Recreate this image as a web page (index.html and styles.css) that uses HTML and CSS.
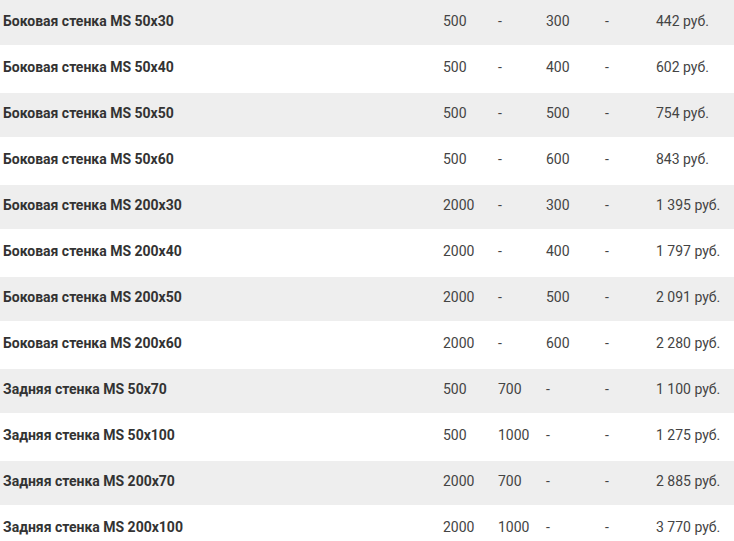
FILE: index.html
```html
<!DOCTYPE html>
<html lang="ru">
<head>
<meta charset="utf-8">
<link rel="stylesheet" href="styles.css">
</head>
<body>
<table class="price">
<colgroup>
<col class="c-name"><col class="c-a"><col class="c-b"><col class="c-c"><col class="c-d"><col class="c-p">
</colgroup>
<tbody>
<tr class="odd"><td class="name">Боковая стенка MS 50x30</td><td>500</td><td>-</td><td>300</td><td>-</td><td>442 руб.</td></tr>
<tr><td class="name">Боковая стенка MS 50x40</td><td>500</td><td>-</td><td>400</td><td>-</td><td>602 руб.</td></tr>
<tr class="odd"><td class="name">Боковая стенка MS 50x50</td><td>500</td><td>-</td><td>500</td><td>-</td><td>754 руб.</td></tr>
<tr><td class="name">Боковая стенка MS 50x60</td><td>500</td><td>-</td><td>600</td><td>-</td><td>843 руб.</td></tr>
<tr class="odd"><td class="name">Боковая стенка MS 200x30</td><td>2000</td><td>-</td><td>300</td><td>-</td><td>1 395 руб.</td></tr>
<tr><td class="name">Боковая стенка MS 200x40</td><td>2000</td><td>-</td><td>400</td><td>-</td><td>1 797 руб.</td></tr>
<tr class="odd"><td class="name">Боковая стенка MS 200x50</td><td>2000</td><td>-</td><td>500</td><td>-</td><td>2 091 руб.</td></tr>
<tr><td class="name">Боковая стенка MS 200x60</td><td>2000</td><td>-</td><td>600</td><td>-</td><td>2 280 руб.</td></tr>
<tr class="odd"><td class="name">Задняя стенка MS 50x70</td><td>500</td><td>700</td><td>-</td><td>-</td><td>1 100 руб.</td></tr>
<tr><td class="name">Задняя стенка MS 50x100</td><td>500</td><td>1000</td><td>-</td><td>-</td><td>1 275 руб.</td></tr>
<tr class="odd"><td class="name">Задняя стенка MS 200x70</td><td>2000</td><td>700</td><td>-</td><td>-</td><td>2 885 руб.</td></tr>
<tr><td class="name">Задняя стенка MS 200x100</td><td>2000</td><td>1000</td><td>-</td><td>-</td><td>3 770 руб.</td></tr>
</tbody>
</table>
</body>
</html>
```
FILE: styles.css
```css
html, body {
  margin: 0;
  padding: 0;
  background: #ffffff;
}
.price {
  width: 734px;
  border-collapse: collapse;
  table-layout: fixed;
  font-family: Roboto, "Noto Sans", sans-serif;
  font-size: 14px;
  color: #444444;
}
.c-name { width: 440px; }
.c-a { width: 55px; }
.c-b { width: 48px; }
.c-c { width: 59px; }
.c-d { width: 51px; }
.c-p { width: 81px; }
.price tr {
  height: 46px;
  border-bottom: 2px solid #ffffff;
}
.price tr.odd td {
  background: #eeeeee;
}
.price td {
  height: 40px;
  padding: 0 0 4px 3px;
  vertical-align: middle;
  white-space: nowrap;
}
.price td.name {
  font-weight: 700;
  color: #333333;
}
```
